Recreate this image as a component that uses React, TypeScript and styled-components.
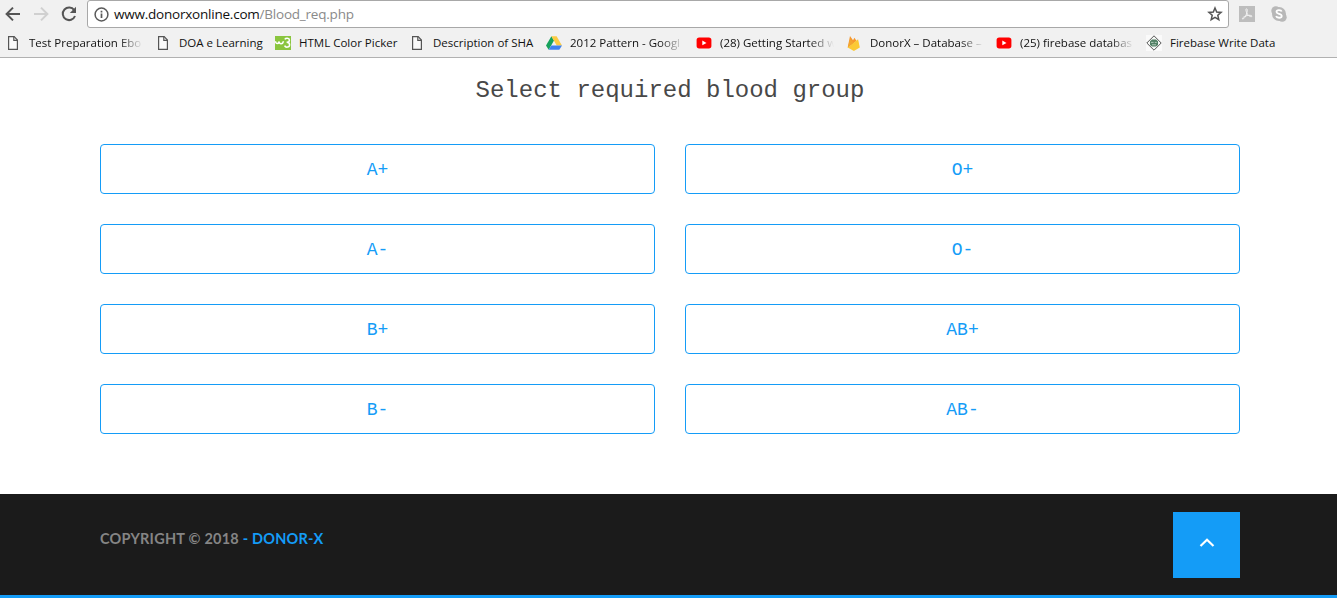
import React, { ReactNode } from "react";
import styled, { createGlobalStyle, css } from "styled-components";

const BLUE = "#149cf7";

const GlobalStyle = createGlobalStyle`
  * { box-sizing: border-box; }
  body { margin: 0; background: #fff; overflow: hidden; }
`;

const Chrome = styled.header`
  height: 58px;
  background: #f1f1f1;
  border-bottom: 1px solid #b1b1b1;
  font-family: "Open Sans", "Noto Sans", sans-serif;
`;

const Toolbar = styled.div`
  display: flex;
  align-items: center;
  height: 28px;
  padding-left: 4px;
`;

const NavButtons = styled.div`
  display: flex;
  gap: 10px;
  width: 83px;
  svg { display: block; }
`;

const AddressBar = styled.div`
  display: flex;
  align-items: center;
  width: 1142px;
  height: 28px;
  padding: 0 5px 0 6px;
  background: #fff;
  border: 1px solid #a8a8a8;
  border-radius: 3px;
`;

const Url = styled.span`
  flex: 1;
  margin-left: 5px;
  font-size: 13.5px;
  line-height: 26px;
  letter-spacing: -0.22px;
  color: #8a8a8a;
  white-space: nowrap;
`;

const Host = styled.span`
  color: #111;
`;

const Extensions = styled.div`
  display: flex;
  gap: 16px;
  margin-left: 10px;
  svg { display: block; }
`;

const BookmarkBar = styled.nav`
  display: flex;
  align-items: center;
  height: 29px;
  padding: 1px 0 0 5px;
`;

const Bookmark = styled.a`
  display: flex;
  align-items: center;
  gap: 8px;
  margin-right: 12px;
  svg { display: block; flex: none; }
`;

const BookmarkLabel = styled.span<{ $width: number; $fade?: boolean }>`
  width: ${(p) => p.$width}px;
  font-size: 11.5px;
  line-height: 18px;
  white-space: nowrap;
  color: #111;
  ${(p) =>
    p.$fade &&
    css`
      mask-image: linear-gradient(to right, #000 calc(100% - 24px), transparent);
    `}
`;

const Container = styled.div`
  width: 1140px;
  margin: 0 auto 0 100px;
`;

const Main = styled.main`
  height: 436px;
  padding-top: 18px;
  font-family: "Liberation Mono", monospace;
`;

const Title = styled.h1`
  margin: 0 0 38px;
  font-size: 24px;
  line-height: 30px;
  font-weight: 400;
  text-align: center;
  color: #484848;
`;

const Groups = styled.div`
  display: grid;
  grid-template-columns: 1fr 1fr;
  gap: 30px;
`;

const GroupButton = styled.button`
  height: 50px;
  padding: 2px 0 0;
  border: 1px solid ${BLUE};
  border-radius: 4px;
  background: #fff;
  color: ${BLUE};
  font: 18px "Liberation Mono", monospace;
`;

const Footer = styled.footer`
  height: 104px;
  background: #1b1b1b;
  border-bottom: 3px solid ${BLUE};
`;

const FooterRow = styled(Container)`
  display: flex;
  justify-content: space-between;
  padding-top: 18px;
`;

const Copyright = styled.p`
  margin: 17px 0 0;
  font: 700 14.5px/20px Lato, sans-serif;
  letter-spacing: 0.22px;
  color: #858585;
  a { color: ${BLUE}; }
`;

const TopButton = styled.button`
  display: flex;
  justify-content: center;
  align-items: center;
  width: 67px;
  height: 66px;
  padding: 0 0 5px;
  border: 0;
  background: ${BLUE};
`;

const BackIcon = ({ color }: { color: string }) => (
  <svg width="18" height="18" viewBox="0 0 18 18" fill="none" stroke={color} strokeWidth="2">
    <path d="M16 9H3.2M9 2.6 2.6 9 9 15.4" />
  </svg>
);

const ForwardIcon = ({ color }: { color: string }) => (
  <svg width="18" height="18" viewBox="0 0 18 18" fill="none" stroke={color} strokeWidth="2">
    <path d="M2 9h12.8M9 2.6 15.4 9 9 15.4" />
  </svg>
);

const ReloadIcon = () => (
  <svg width="18" height="18" viewBox="0 0 18 18">
    <path d="M14.2 5.1A6.3 6.3 0 1 0 15 11" fill="none" stroke="#555" strokeWidth="2" />
    <path d="M16 1.8V8H9.8z" fill="#555" />
  </svg>
);

const InfoIcon = () => (
  <svg width="15" height="15" viewBox="0 0 15 15" fill="none" stroke="#5a5a5a" strokeWidth="1.5">
    <circle cx="7.5" cy="7.5" r="6.4" />
    <path d="M7.5 6.5V11M7.5 3.8v1.6" strokeWidth="1.7" />
  </svg>
);

const StarIcon = () => (
  <svg width="16" height="16" viewBox="0 0 16 16" fill="none" stroke="#555" strokeWidth="1.5">
    <path d="m8 2 1.7 4 4.4.4-3.3 2.9 1 4.3L8 11.3l-3.8 2.3 1-4.3-3.3-2.9L6.3 6z" />
  </svg>
);

const PdfIcon = () => (
  <svg width="16" height="16" viewBox="0 0 16 16">
    <path d="M0 0h16v16H0z" fill="#bdbdbd" />
    <path
      d="M7.3 2.8c1.6-.3.8 3.4.2 5.2-.8 2.3-2.6 5.2-3.8 5-1.5-.4 1.5-2.8 4.4-3.4 2.5-.6 5-.3 4.8.7-.3 1.2-3.2-.2-4.4-2C7.3 6.5 6.3 3 7.3 2.8z"
      fill="none"
      stroke="#f4f4f4"
      strokeWidth="1"
    />
  </svg>
);

const SkypeIcon = () => (
  <svg width="16" height="16" viewBox="0 0 16 16">
    <circle cx="4.8" cy="4.8" r="4.5" fill="#b8b8b8" />
    <circle cx="11.2" cy="11.2" r="4.5" fill="#b8b8b8" />
    <circle cx="8" cy="8" r="7" fill="#b8b8b8" />
    <path
      d="M10.7 5.6C10.1 3.7 5.5 3.6 5.5 5.9c0 2.300 5.200 1.500 5.200 4 0 2.500-5 2.400-5.600.2"
      fill="none"
      stroke="#fff"
      strokeWidth="1.8"
    />
  </svg>
);

const PageIcon = () => (
  <svg width="16" height="16" viewBox="0 0 16 16" fill="#fafafa" stroke="#555" strokeWidth="1.2">
    <path d="M3.6 1.6h5.6l3.200 3.400v9.400H3.600z" />
    <path d="M8.8 1.8v3.600h3.500" fill="none" />
  </svg>
);

const W3Icon = () => (
  <svg width="16" height="16" viewBox="0 0 16 16" fill="none">
    <path d="M0 1h16v14H0z" fill="#8ac53e" />
    <path d="M.5 6.200c.3 3.300 3 3 3.600.3.400 3 3.600 3 4.400-.3" stroke="#fff" strokeWidth="1.5" />
    <path d="M9.8 4.400c1-1.600 4.600-1.500 4.600.8 0 1.700-1.500 2-2.800 2 1.500 0 3 .6 3 2.500 0 2.900-4 3.200-5 .9" stroke="#fff" strokeWidth="1.5" />
  </svg>
);

const DriveIcon = () => (
  <svg width="16" height="16" viewBox="0 0 16 16">
    <path d="M5.4 1.2 0 10.400l2.700 4.400L8 5.600z" fill="#16a25c" />
    <path d="M5.4 1.2h5.200l5.400 9.200h-5.300z" fill="#fccb43" />
    <path d="M5.3 10.4H16l-2.700 4.400H2.700z" fill="#3f81ee" />
  </svg>
);

const YoutubeIcon = () => (
  <svg width="16" height="16" viewBox="0 0 16 16">
    <rect x=".6" y="2.4" width="14.8" height="11" rx="2.6" fill="#f00" />
    <path d="m6.3 5.5 4.2 2.4-4.2 2.4z" fill="#fff" />
  </svg>
);

const FirebaseIcon = () => (
  <svg width="16" height="16" viewBox="0 0 16 16">
    <path d="M1.7 12.5 4 .9l3 4.400 1.500-2.500 2 3.200z" fill="#f6982d" />
    <path d="m1.7 12.5 10.400-8.300 1.700 8.300L7.900 16z" fill="#fbc934" />
    <path d="M1.7 12.5 4.200 4l3.500 3.700z" fill="#f3a52f" />
  </svg>
);

const DiamondIcon = () => (
  <svg width="16" height="16" viewBox="0 0 16 16">
    <path d="M0 0h16v16H0z" fill="#fafafa" />
    <path d="M8 .8 15.200 8 8 15.200.8 8z" fill="#f4f6f4" stroke="#555" strokeWidth="1" />
    <path d="M4 6.300 6 4.600h4l2 1.700v3.800l-2 1.500H6l-2-1.500z" fill="#527f65" />
    <path d="M5 7.400h2.600M8.800 7.400h2M6 9.800h4" stroke="#c9dccf" strokeWidth=".8" />
  </svg>
);

interface BookmarkItem {
  icon: ReactNode;
  label: string;
  width: number;
  fade?: boolean;
}

const bookmarks: BookmarkItem[] = [
  { icon: <PageIcon />, label: "Test Preparation Ebo", width: 114, fade: true },
  { icon: <PageIcon />, label: "DOA e Learning", width: 84 },
  { icon: <W3Icon />, label: "HTML Color Picker", width: 98 },
  { icon: <PageIcon />, label: "Description of SHA", width: 101 },
  { icon: <DriveIcon />, label: "2012 Pattern - Googl", width: 114, fade: true },
  { icon: <YoutubeIcon />, label: "(28) Getting Started w", width: 114, fade: true },
  { icon: <FirebaseIcon />, label: "DonorX – Database –", width: 114, fade: true },
  { icon: <YoutubeIcon />, label: "(25) firebase databas", width: 114, fade: true },
  { icon: <DiamondIcon />, label: "Firebase Write Data", width: 114 },
];

const groups = ["A+", "O+", "A-", "O-", "B+", "AB+", "B-", "AB-"];

export default function App() {
  return (
    <>
      <GlobalStyle />
      <Chrome>
        <Toolbar>
          <NavButtons>
            <BackIcon color="#555" />
            <ForwardIcon color="#d0d0d0" />
            <ReloadIcon />
          </NavButtons>
          <AddressBar>
            <InfoIcon />
            <Url>
              <Host>www.donorxonline.com</Host>/Blood_req.php
            </Url>
            <StarIcon />
          </AddressBar>
          <Extensions>
            <PdfIcon />
            <SkypeIcon />
          </Extensions>
        </Toolbar>
        <BookmarkBar>
          {bookmarks.map((b) => (
            <Bookmark key={b.label}>
              {b.icon}
              <BookmarkLabel $width={b.width} $fade={b.fade}>
                {b.label}
              </BookmarkLabel>
            </Bookmark>
          ))}
        </BookmarkBar>
      </Chrome>
      <Main>
        <Container>
          <Title>Select required blood group</Title>
          <Groups>
            {groups.map((g) => (
              <GroupButton key={g}>{g}</GroupButton>
            ))}
          </Groups>
        </Container>
      </Main>
      <Footer>
        <FooterRow>
          <Copyright>
            COPYRIGHT © 2018 <a>- DONOR-X</a>
          </Copyright>
          <TopButton aria-label="Back to top">
            <svg width="16" height="10" viewBox="0 0 16 10" fill="none" stroke="#fff" strokeWidth="2.2">
              <path d="m1.5 8 6.500-6.300L14.500 8" />
            </svg>
          </TopButton>
        </FooterRow>
      </Footer>
    </>
  );
}
